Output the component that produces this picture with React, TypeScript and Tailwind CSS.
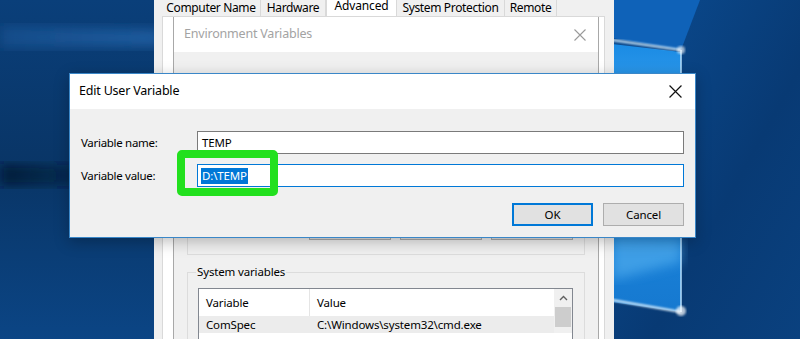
import React from "react";

const FONT = { fontFamily: '"Noto Sans", "Open Sans", sans-serif' };

// desktop wallpaper (drawing only)
const Wallpaper = () => (
  <svg className="absolute inset-0" width={800} height={339} viewBox="0 0 800 339">
    <defs>
      <linearGradient id="leftBg" x1="0" y1="0" x2="0" y2="1">
        <stop offset="0" stopColor="#0a3f7a" />
        <stop offset="0.5" stopColor="#093566" />
        <stop offset="1" stopColor="#0b4585" />
      </linearGradient>
      <linearGradient id="rightBg" x1="0" y1="0" x2="1" y2="1">
        <stop offset="0" stopColor="#0b4c92" />
        <stop offset="0.6" stopColor="#083a74" />
        <stop offset="1" stopColor="#0a417f" />
      </linearGradient>
      <linearGradient id="pane" x1="0" y1="0" x2="0" y2="1">
        <stop offset="0" stopColor="#1a8be4" />
        <stop offset="0.25" stopColor="#3da2ee" />
        <stop offset="0.45" stopColor="#1c88df" />
        <stop offset="1" stopColor="#1679d0" />
      </linearGradient>
      <linearGradient id="streak" x1="0" y1="0" x2="1" y2="0">
        <stop offset="0" stopColor="#2a6fb8" stopOpacity="0.3" />
        <stop offset="1" stopColor="#2a6fb8" stopOpacity="0.65" />
      </linearGradient>
      <linearGradient id="darkBand" x1="0" y1="0" x2="1" y2="0">
        <stop offset="0" stopColor="#021a35" stopOpacity="0.9" />
        <stop offset="0.6" stopColor="#021a35" stopOpacity="0.5" />
        <stop offset="1" stopColor="#021a35" stopOpacity="0" />
      </linearGradient>
      <filter id="blur6">
        <feGaussianBlur stdDeviation="6" />
      </filter>
      <filter id="blur1">
        <feGaussianBlur stdDeviation="1.2" />
      </filter>
    </defs>
    <rect width="800" height="339" fill="url(#leftBg)" />
    <polygon points="0,26 160,30 160,46 0,48" fill="url(#streak)" filter="url(#blur6)" />
    <polygon points="0,164 110,166 110,186 0,186" fill="url(#darkBand)" filter="url(#blur6)" />
    <rect x="612" y="0" width="188" height="339" fill="url(#rightBg)" />
    <polygon points="612,0 700,0 681,50 612,38" fill="#0f62b8" />
    <polygon points="612,44 681,52 681,312 612,302" fill="url(#pane)" />
    <polygon points="612,236 681,238 681,262 612,280" fill="#58b4f2" opacity="0.6" filter="url(#blur6)" />
    <line x1="612" y1="40" x2="681" y2="50" stroke="#d8f0ff" strokeWidth="2" filter="url(#blur1)" />
    <line x1="681" y1="50" x2="681" y2="312" stroke="#b8e2ff" strokeWidth="1.5" />
    <line x1="612" y1="300" x2="681" y2="312" stroke="#e6f6ff" strokeWidth="2" filter="url(#blur1)" />
    <circle cx="681" cy="311" r="5" fill="#ffffff" opacity="0.7" filter="url(#blur1)" />
    <circle cx="681" cy="50" r="4" fill="#ffffff" opacity="0.6" filter="url(#blur1)" />
  </svg>
);

const CloseX = ({ color, size = 12 }: { color: string; size?: number }) => (
  <svg width={size} height={size} viewBox="0 0 12 12">
    <path d="M0.5 0.5 L11.5 11.5 M11.5 0.5 L0.5 11.5" stroke={color} strokeWidth="1.1" fill="none" />
  </svg>
);

const tabs = [
  { label: "Computer Name", w: "w-[99px]" },
  { label: "Hardware", w: "w-[65px]" },
  { label: "Advanced", w: "w-[71px]", active: true },
  { label: "System Protection", w: "w-[108px]" },
  { label: "Remote", w: "w-[52px]" },
];

const BgButton = () => (
  <div className="h-[24px] w-[82px] border border-[#adadad] bg-[#e1e1e1]" />
);

const App = () => {
  return (
    <div
      className="relative h-[339px] w-[800px] overflow-hidden text-[11.5px] tracking-[-0.15px] text-black"
      style={FONT}
    >
      <Wallpaper />

      {/* System Properties */}
      <div className="absolute left-[154px] top-0 flex h-[339px] w-[460px] flex-col overflow-hidden bg-[#f0f0f0] pl-[8px] pr-[9px]">
        <div className="flex h-[16px] shrink-0 items-end">
          {tabs.map((t) =>
            t.active ? (
              <div
                key={t.label}
                className={`${t.w} -mb-px flex h-[18px] items-start justify-center border-x border-[#d9d9d9] bg-white pt-[1px] text-[12px] leading-[12px]`}
              >
                {t.label}
              </div>
            ) : (
              <div
                key={t.label}
                className={`${t.w} flex h-[16px] items-start justify-center border-r border-[#d9d9d9] bg-[#f0f0f0] pt-[1px] text-[12px] leading-[13px] tracking-[-0.35px]`}
              >
                {t.label}
              </div>
            )
          )}
        </div>
        <div className="flex-1 border border-[#d9d9d9] bg-white pl-[10px] pr-[5px]">
          {/* Environment Variables (inactive) */}
          <div className="flex flex-col border-x border-[#a8a8a8] bg-[#f0f0f0] pb-[20px]">
            <div className="flex h-[35px] shrink-0 items-center justify-between bg-white pl-[10px] pr-[12px] text-[12.5px] tracking-[-0.2px] text-[#a3a3a3]">
              <span>Environment Variables</span>
              <CloseX color="#9a9a9a" />
            </div>
            <div className="flex shrink-0 flex-col px-[13px] pt-[28px]">
              <div className="flex h-[175px] shrink-0 flex-col justify-end border border-[#dcdcdc] pb-[14px] pr-[11px]">
                <div className="flex justify-end gap-[9px]">
                  <BgButton />
                  <BgButton />
                  <BgButton />
                </div>
              </div>
              <fieldset className="mt-[10px] shrink-0 border border-[#dcdcdc] pl-[10px] pr-[11px]">
                <legend className="ml-[-2px] px-[1px] leading-[14px]">System variables</legend>
                <div className="mt-[9px] h-[60px] border border-[#828790] bg-white">
                  <div className="flex">
                    <div className="flex-1">
                      <div className="flex h-[27px] items-center">
                        <div className="w-[111px] border-r border-[#e5e5e5] pl-[7px] leading-[27px]">Variable</div>
                        <div className="pl-[7px]">Value</div>
                      </div>
                      <div className="flex h-[17px] items-center bg-[#ececec]">
                        <div className="w-[111px] pl-[7px]">ComSpec</div>
                        <div className="pl-[7px]">C:\Windows\system32\cmd.exe</div>
                      </div>
                    </div>
                    <div className="flex w-[18px] flex-col items-center bg-[#f0f0f0]">
                      <div className="flex h-[18px] items-center">
                        <svg width="9" height="6" viewBox="0 0 9 6">
                          <path d="M1 5 L4.5 1.5 L8 5" stroke="#606060" strokeWidth="1.4" fill="none" />
                        </svg>
                      </div>
                      <div className="h-[20px] w-[16px] bg-[#cdcdcd]" />
                    </div>
                  </div>
                </div>
              </fieldset>
            </div>
          </div>
        </div>
      </div>

      {/* Edit User Variable dialog */}
      <div className="absolute left-[69px] top-[73px] flex h-[165px] w-[627px] flex-col border border-[#3a87c8] bg-[#f0f0f0] shadow-[0_4px_14px_rgba(0,0,0,0.25)]">
        <div className="flex h-[35px] items-center justify-between bg-white pl-[9px] pr-[13px]">
          <span className="text-[12.5px] tracking-[-0.2px]">Edit User Variable</span>
          <CloseX color="#111111" size={13} />
        </div>
        <div className="flex flex-col gap-[10px] pl-[11px] pr-[11px] pt-[22px]">
          <div className="flex items-center">
            <div className="w-[116px] tracking-[-0.3px]">Variable name:</div>
            <div className="flex h-[23px] flex-1 items-center border border-[#7a7a7a] bg-white pl-[4px]">TEMP</div>
          </div>
          <div className="flex items-center">
            <div className="w-[116px] tracking-[-0.3px]">Variable value:</div>
            <div className="flex h-[23px] flex-1 items-center border border-[#0078d7] bg-white pl-[3px]">
              <span className="bg-[#0078d7] px-px leading-[16px] text-white">D:\TEMP</span>
            </div>
          </div>
          <div className="mt-[6px] flex justify-end gap-[10px]">
            <button className="h-[23px] w-[81px] border-2 border-[#0078d7] bg-[#e1e1e1]">OK</button>
            <button className="h-[23px] w-[81px] border border-[#adadad] bg-[#e1e1e1]">Cancel</button>
          </div>
        </div>
      </div>

      {/* green highlight */}
      <div className="absolute left-[177px] top-[150px] h-[46px] w-[101px] rounded-[5px] border-[8px] border-[#22e01e]" />
    </div>
  );
};

export default App;
